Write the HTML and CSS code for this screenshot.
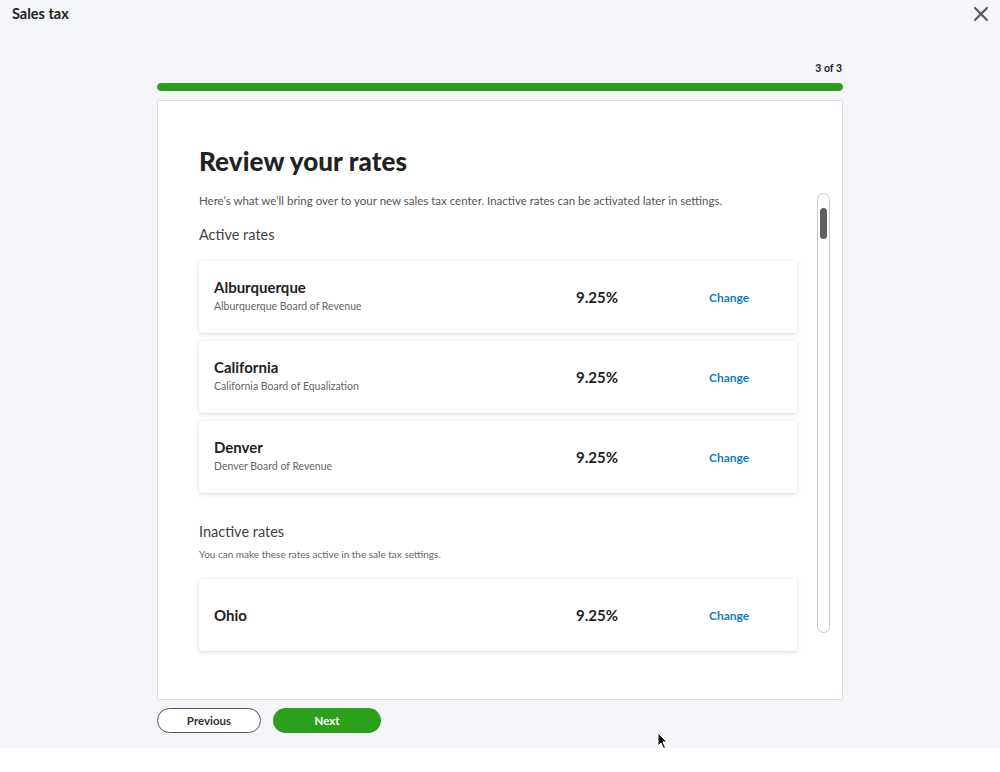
FILE: index.html
```html
<!DOCTYPE html>
<html>
<head>
<meta charset="utf-8">
<link rel="stylesheet" href="styles.css">
</head>
<body>
<div class="app">
  <header class="topbar">
    <h1 class="title">Sales tax</h1>
    <button class="close" aria-label="Close">
      <svg width="16" height="16" viewBox="0 0 16 16"><path d="M2 2 L14 14 M14 2 L2 14" stroke="#555" stroke-width="2" stroke-linecap="round"/></svg>
    </button>
  </header>
  <main class="wizard">
    <div class="step">3 of 3</div>
    <div class="progress"><div class="progress-fill" style="width:100%"></div></div>
    <section class="panel">
      <div class="scroll">
        <h2 class="heading">Review your rates</h2>
        <p class="intro">Here’s what we’ll bring over to your new sales tax center. Inactive rates can be activated later in settings.</p>
        <h3 class="section-title">Active rates</h3>
        <div class="rates">
          <div class="rate">
            <div class="rate-name"><div class="name">Alburquerque</div><div class="agency">Alburquerque Board of Revenue</div></div>
            <div class="pct">9.25%</div>
            <a class="change">Change</a>
          </div>
          <div class="rate">
            <div class="rate-name"><div class="name">California</div><div class="agency">California Board of Equalization</div></div>
            <div class="pct">9.25%</div>
            <a class="change">Change</a>
          </div>
          <div class="rate">
            <div class="rate-name"><div class="name">Denver</div><div class="agency">Denver Board of Revenue</div></div>
            <div class="pct">9.25%</div>
            <a class="change">Change</a>
          </div>
        </div>
        <h3 class="section-title inactive-title">Inactive rates</h3>
        <p class="note">You can make these rates active in the sale tax settings.</p>
        <div class="rates">
          <div class="rate">
            <div class="rate-name"><div class="name">Ohio</div></div>
            <div class="pct">9.25%</div>
            <a class="change">Change</a>
          </div>
        </div>
      </div>
      <div class="scrollbar"><div class="thumb"></div></div>
    </section>
    <div class="actions">
      <button class="btn btn-prev">Previous</button>
      <button class="btn btn-next">Next</button>
    </div>
  </main>
  <svg class="cursor" width="12" height="18" viewBox="0 0 12 18"><path d="M1 1 L1 14 L4 11 L6.5 16.5 L8.5 15.5 L6 10 L10 10 Z" fill="#111" stroke="#fff" stroke-width="1"/></svg>
</div>
<div class="footer-strip"></div>
</body>
</html>
```
FILE: styles.css
```css
* { box-sizing: border-box; }
html, body { margin: 0; padding: 0; }
body {
  font-family: "Lato", "Open Sans", sans-serif;
  color: #222;
  background: #fff;
  width: 1000px;
  height: 772px;
  overflow: hidden;
}
.app {
  position: relative;
  height: 748px;
  background: #f4f5f8;
}
.topbar {
  display: flex;
  justify-content: space-between;
  align-items: flex-start;
  padding: 4px 11px 0 12px;
  height: 30px;
}
.title {
  margin: 0;
  font-size: 14.5px;
  font-weight: 700;
  line-height: 20px;
  color: #222;
}
.close {
  background: none;
  border: 0;
  padding: 0;
  margin-top: 2px;
  width: 16px;
  height: 16px;
  display: flex;
}
.wizard {
  width: 686px;
  margin: 0 auto;
  display: flex;
  flex-direction: column;
}
.step {
  align-self: flex-end;
  font-size: 10.5px;
  font-weight: 700;
  margin-top: 31px;
  line-height: 14px;
  margin-right: 1px;
}
.progress {
  margin-top: 8px;
  height: 8px;
  border-radius: 4px;
  background: #dcdfe4;
  overflow: hidden;
}
.progress-fill {
  height: 100%;
  background: #2ca01c;
  border-radius: 4px;
}
.panel {
  position: relative;
  margin-top: 9px;
  height: 600px;
  background: #fff;
  border: 1px solid #dcdde0;
  border-radius: 2px;
  overflow: hidden;
}
.scroll {
  padding: 44px 45px 0 41px;
  height: 100%;
  overflow: hidden;
}
.heading {
  margin: 0;
  font-size: 26px;
  font-weight: 900;
  line-height: 32px;
  letter-spacing: 0.1px;
  color: #222;
}
.intro {
  margin: 16px 0 0;
  font-size: 11.5px;
  line-height: 16px;
  color: #555;
}
.section-title {
  margin: 16px 0 0;
  font-size: 14.5px;
  font-weight: 400;
  line-height: 20px;
  color: #444;
}
.rates {
  display: flex;
  flex-direction: column;
  gap: 8px;
  margin-top: 16px;
}
.rate {
  display: flex;
  align-items: center;
  height: 72px;
  padding: 0 0 0 15px;
  background: #fff;
  border-radius: 3px;
  box-shadow: 0 1px 4px rgba(0,0,0,0.16);
}
.rate-name { flex: 0 0 362px; }
.name {
  font-size: 15px;
  font-weight: 700;
  line-height: 18px;
  color: #222;
}
.agency {
  margin-top: 3px;
  margin-bottom: 4px;
  font-size: 10.5px;
  line-height: 14px;
  color: #666;
}
.pct {
  flex: 0 0 133px;
  font-size: 15px;
  font-weight: 700;
  color: #222;
}
.change {
  font-size: 12px;
  font-weight: 700;
  color: #0b7fc4;
}
.inactive-title { margin-top: 29px; }
.note {
  margin: 5px 0 0;
  font-size: 10px;
  line-height: 14px;
  color: #666;
}
.note + .rates { margin-top: 18px; }
.scrollbar {
  position: absolute;
  left: 659px;
  top: 92px;
  width: 13px;
  height: 440px;
  border: 1px solid #c8c8c8;
  border-radius: 7px;
  background: #fff;
  padding: 14px 2px;
}
.thumb {
  width: 7px;
  height: 31px;
  border-radius: 4px;
  background: #5f5f5f;
}
.actions {
  display: flex;
  gap: 12px;
  margin-top: 8px;
}
.btn {
  height: 25px;
  border-radius: 13px;
  font-family: "Lato", sans-serif;
  font-size: 11.5px;
  font-weight: 700;
  padding: 0;
}
.btn-prev {
  width: 104px;
  background: #fff;
  border: 1.5px solid #555;
  color: #333;
}
.btn-next {
  width: 108px;
  background: #2ca01c;
  border: 0;
  color: #fff;
}
.cursor {
  position: absolute;
  left: 657px;
  top: 732px;
}
.footer-strip { height: 24px; background: #fff; }
```
